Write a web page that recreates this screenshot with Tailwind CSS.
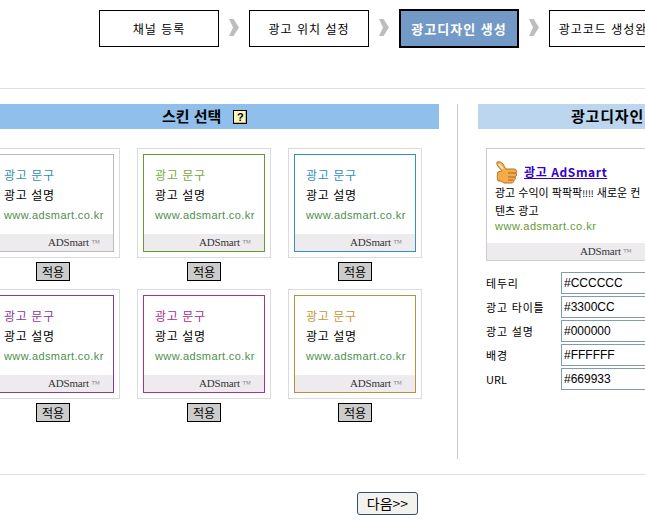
<!DOCTYPE html>
<html lang="ko">
<head>
  <meta charset="UTF-8"/>
  <title>광고디자인 생성</title>
  <script src="https://cdn.jsdelivr.net/npm/@tailwindcss/browser@4"></script>
</head>
<body class="bg-white font-['Noto_Sans_CJK_KR','Liberation_Sans',sans-serif] text-black">
  <div class="w-[645px] h-[530px] overflow-hidden">

    <!-- Steps -->
    <div class="h-[88px] pt-[9px] pl-[99px] flex items-start w-[800px]">
      <div class="w-[120px] h-[37px] mt-px shrink-0 border border-black flex items-center justify-center text-[12px] tracking-[1px]">채널 등록</div>
      <svg class="w-[30px] h-[17px] mt-[10px] shrink-0" viewBox="0 0 30 17"><path d="M10 0h4.500l5.500 8.500-5.500 8.500h-4.500l4-8.500z" fill="#bdbdbd"/></svg>
      <div class="w-[120px] h-[37px] mt-px shrink-0 border border-black flex items-center justify-center text-[12px] tracking-[1px]">광고 위치 설정</div>
      <svg class="w-[30px] h-[17px] mt-[10px] shrink-0" viewBox="0 0 30 17"><path d="M10 0h4.500l5.500 8.500-5.500 8.500h-4.500l4-8.500z" fill="#bdbdbd"/></svg>
      <div class="w-[120px] h-[39px] shrink-0 border-[2px] border-black bg-[#7399c6] text-white font-bold flex items-center justify-center text-[13px] tracking-[1px]">광고디자인 생성</div>
      <svg class="w-[30px] h-[17px] mt-[10px] shrink-0" viewBox="0 0 30 17"><path d="M10 0h4.500l5.500 8.500-5.500 8.500h-4.500l4-8.500z" fill="#bdbdbd"/></svg>
      <div class="w-[120px] h-[37px] mt-px shrink-0 border border-black flex items-center justify-center text-[12px] tracking-[1px] whitespace-nowrap">광고코드 생성완료</div>
    </div>

    <!-- Main -->
    <div class="border-t border-[#dddddd] h-[386px] pt-[15px] flex">

      <!-- Skin list -->
      <div class="w-[439px] shrink-0">
        <div class="h-[25px] bg-[#91bfec] pl-[162px] flex items-center gap-[12px]">
          <span class="text-[15px] font-bold">스킨 선택</span>
          <span class="w-[14px] h-[14px] border border-black bg-[#fdf6c0] text-[11px] font-bold leading-[12px] text-center font-['Liberation_Sans',sans-serif] shadow-[inset_-1px_-1px_0_#c9b96a]">?</span>
        </div>

        <div class="ml-[-14px] mt-[19px] grid grid-cols-[134px_134px_134px] gap-x-[17px] gap-y-[8px]">

          <div class="flex flex-col items-center">
            <div class="w-[134px] h-[110px] border border-[#d8dcdc] p-[5px]">
              <div class="h-full border border-[#bbbbbb] flex flex-col">
                <div class="flex-1 pl-[11px] pt-[10px] text-[12px] tracking-[0.6px] leading-[20px]">
                  <p class="text-[#2f8fb0]">광고 문구</p>
                  <p>광고 설명</p>
                  <p class="font-['Liberation_Sans',sans-serif] text-[#4c8f4c] text-[11px] tracking-[0.4px]">www.adsmart.co.kr</p>
                </div>
                <div class="h-[17px] bg-[#eeebef] pr-[13px] text-right text-[11px] leading-[17px] tracking-[-0.2px] font-['Liberation_Serif',serif] text-[#333333]">ADSmart <span class="text-[9px] text-[#888888]">™</span></div>
              </div>
            </div>
            <button class="mt-[4px] w-[34px] h-[19px] border border-black bg-[#cccccc] text-[12px] leading-[14px]">적용</button>
          </div>

          <div class="flex flex-col items-center">
            <div class="w-[134px] h-[110px] border border-[#d8dcdc] p-[5px]">
              <div class="h-full border border-[#669933] flex flex-col">
                <div class="flex-1 pl-[11px] pt-[10px] text-[12px] tracking-[0.6px] leading-[20px]">
                  <p class="text-[#77aa44]">광고 문구</p>
                  <p>광고 설명</p>
                  <p class="font-['Liberation_Sans',sans-serif] text-[#4c8f4c] text-[11px] tracking-[0.4px]">www.adsmart.co.kr</p>
                </div>
                <div class="h-[17px] bg-[#eeebef] pr-[13px] text-right text-[11px] leading-[17px] tracking-[-0.2px] font-['Liberation_Serif',serif] text-[#333333]">ADSmart <span class="text-[9px] text-[#888888]">™</span></div>
              </div>
            </div>
            <button class="mt-[4px] w-[34px] h-[19px] border border-black bg-[#cccccc] text-[12px] leading-[14px]">적용</button>
          </div>

          <div class="flex flex-col items-center">
            <div class="w-[134px] h-[110px] border border-[#d8dcdc] p-[5px]">
              <div class="h-full border border-[#3a8fb7] flex flex-col">
                <div class="flex-1 pl-[11px] pt-[10px] text-[12px] tracking-[0.6px] leading-[20px]">
                  <p class="text-[#2f8fc0]">광고 문구</p>
                  <p>광고 설명</p>
                  <p class="font-['Liberation_Sans',sans-serif] text-[#4c8f4c] text-[11px] tracking-[0.4px]">www.adsmart.co.kr</p>
                </div>
                <div class="h-[17px] bg-[#eeebef] pr-[13px] text-right text-[11px] leading-[17px] tracking-[-0.2px] font-['Liberation_Serif',serif] text-[#333333]">ADSmart <span class="text-[9px] text-[#888888]">™</span></div>
              </div>
            </div>
            <button class="mt-[4px] w-[34px] h-[19px] border border-black bg-[#cccccc] text-[12px] leading-[14px]">적용</button>
          </div>

          <div class="flex flex-col items-center">
            <div class="w-[134px] h-[110px] border border-[#d8dcdc] p-[5px]">
              <div class="h-full border border-[#8a3a9a] flex flex-col">
                <div class="flex-1 pl-[11px] pt-[10px] text-[12px] tracking-[0.6px] leading-[20px]">
                  <p class="text-[#8a3a9a]">광고 문구</p>
                  <p>광고 설명</p>
                  <p class="font-['Liberation_Sans',sans-serif] text-[#4c8f4c] text-[11px] tracking-[0.4px]">www.adsmart.co.kr</p>
                </div>
                <div class="h-[17px] bg-[#eeebef] pr-[13px] text-right text-[11px] leading-[17px] tracking-[-0.2px] font-['Liberation_Serif',serif] text-[#333333]">ADSmart <span class="text-[9px] text-[#888888]">™</span></div>
              </div>
            </div>
            <button class="mt-[4px] w-[34px] h-[19px] border border-black bg-[#cccccc] text-[12px] leading-[14px]">적용</button>
          </div>

          <div class="flex flex-col items-center">
            <div class="w-[134px] h-[110px] border border-[#d8dcdc] p-[5px]">
              <div class="h-full border border-[#aa3388] flex flex-col">
                <div class="flex-1 pl-[11px] pt-[10px] text-[12px] tracking-[0.6px] leading-[20px]">
                  <p class="text-[#aa3388]">광고 문구</p>
                  <p>광고 설명</p>
                  <p class="font-['Liberation_Sans',sans-serif] text-[#4c8f4c] text-[11px] tracking-[0.4px]">www.adsmart.co.kr</p>
                </div>
                <div class="h-[17px] bg-[#eeebef] pr-[13px] text-right text-[11px] leading-[17px] tracking-[-0.2px] font-['Liberation_Serif',serif] text-[#333333]">ADSmart <span class="text-[9px] text-[#888888]">™</span></div>
              </div>
            </div>
            <button class="mt-[4px] w-[34px] h-[19px] border border-black bg-[#cccccc] text-[12px] leading-[14px]">적용</button>
          </div>

          <div class="flex flex-col items-center">
            <div class="w-[134px] h-[110px] border border-[#d8dcdc] p-[5px]">
              <div class="h-full border border-[#b8923a] flex flex-col">
                <div class="flex-1 pl-[11px] pt-[10px] text-[12px] tracking-[0.6px] leading-[20px]">
                  <p class="text-[#c09a3a]">광고 문구</p>
                  <p>광고 설명</p>
                  <p class="font-['Liberation_Sans',sans-serif] text-[#4c8f4c] text-[11px] tracking-[0.4px]">www.adsmart.co.kr</p>
                </div>
                <div class="h-[17px] bg-[#eeebef] pr-[13px] text-right text-[11px] leading-[17px] tracking-[-0.2px] font-['Liberation_Serif',serif] text-[#333333]">ADSmart <span class="text-[9px] text-[#888888]">™</span></div>
              </div>
            </div>
            <button class="mt-[4px] w-[34px] h-[19px] border border-black bg-[#cccccc] text-[12px] leading-[14px]">적용</button>
          </div>
        </div>
      </div>

      <!-- Divider -->
      <div class="ml-[18px] w-px h-[355px] bg-[#cccccc] shrink-0"></div>

      <!-- Design panel -->
      <div class="ml-[20px] w-[240px] shrink-0">
        <div class="h-[25px] bg-[#bbd6ee] pl-[93px] flex items-center">
          <span class="text-[15px] font-bold tracking-[0.8px] whitespace-nowrap">광고디자인</span>
        </div>
        <div class="ml-[8px] mt-[19px] w-[190px] h-[113px] border border-[#cccccc] flex flex-col">
          <div class="flex-1 pl-[8px] pt-[13px] pr-[32px] text-[11px] leading-[16px]">
            <div class="flex items-center gap-[5px] h-[20px]">
              <svg class="w-[24px] h-[25px] shrink-0" viewBox="0 0 24 25">
                <path d="M2 2c3-1 6 1 7 4l2 3h8c3 0 3 3 2 4 1 1 1 3-1 4 1 1 0 3-1 3 0 2-1 3-3 3h-7l-3-2H3c-1-3-1-6 0-9l4-1C5 8 1 6 2 2z" fill="#f5ab4a" stroke="#b8732a" stroke-width="1"/>
                <path d="M4 4c1 2 3 3 4 5" stroke="#fde3b0" stroke-width="2" fill="none"/>
                <path d="M13 13h8M13 17h7M13 20h5" stroke="#a8641c" stroke-width="1"/>
              </svg>
              <a class="text-[#3300cc] font-bold underline text-[12px] tracking-[0.6px] whitespace-nowrap">광고 AdSmart</a>
            </div>
            <p class="mt-[2px]">광고 수익이 팍팍팍<span class="text-[9px]">!!!!</span> 새로운 컨텐츠 광고</p>
            <p class="font-['Liberation_Sans',sans-serif] text-[#669933] text-[11px] tracking-[0.5px]">www.adsmart.co.kr</p>
          </div>
          <div class="h-[17px] bg-[#eeebef] pl-[93px] text-[11px] leading-[17px] tracking-[-0.2px] font-['Liberation_Serif',serif] text-[#333333]">ADSmart <span class="text-[9px] text-[#888888]">™</span></div>
        </div>

        <div class="ml-[8px] mt-[11px] flex flex-col gap-[2px] text-[11px]">
          <label class="flex items-center h-[22px]"><span class="w-[75px] tracking-[0.8px]">테두리</span><input class="w-[120px] h-[22px] border border-[#7f9db0] px-[2px] text-[12px] font-['Liberation_Sans',sans-serif]" value="#CCCCCC"/></label>
          <label class="flex items-center h-[22px]"><span class="w-[75px] tracking-[0.8px]">광고 타이틀</span><input class="w-[120px] h-[22px] border border-[#7f9db0] px-[2px] text-[12px] font-['Liberation_Sans',sans-serif]" value="#3300CC"/></label>
          <label class="flex items-center h-[22px]"><span class="w-[75px] tracking-[0.8px]">광고 설명</span><input class="w-[120px] h-[22px] border border-[#7f9db0] px-[2px] text-[12px] font-['Liberation_Sans',sans-serif]" value="#000000"/></label>
          <label class="flex items-center h-[22px]"><span class="w-[75px] tracking-[0.8px]">배경</span><input class="w-[120px] h-[22px] border border-[#7f9db0] px-[2px] text-[12px] font-['Liberation_Sans',sans-serif]" value="#FFFFFF"/></label>
          <label class="flex items-center h-[22px]"><span class="w-[75px]">URL</span><input class="w-[120px] h-[22px] border border-[#7f9db0] px-[2px] text-[12px] font-['Liberation_Sans',sans-serif]" value="#669933"/></label>
        </div>
      </div>
    </div>

    <!-- Footer -->
    <div class="border-t border-[#dddddd] pt-[17px] pl-[357px] flex items-start">
      <button class="w-[61px] h-[23px] pb-[2px] border border-[#2f4f6f] rounded-[3px] bg-[#f4f2ee] text-[14px] leading-[18px]">다음&gt;&gt;</button>
    </div>
  </div>
</body>
</html>
